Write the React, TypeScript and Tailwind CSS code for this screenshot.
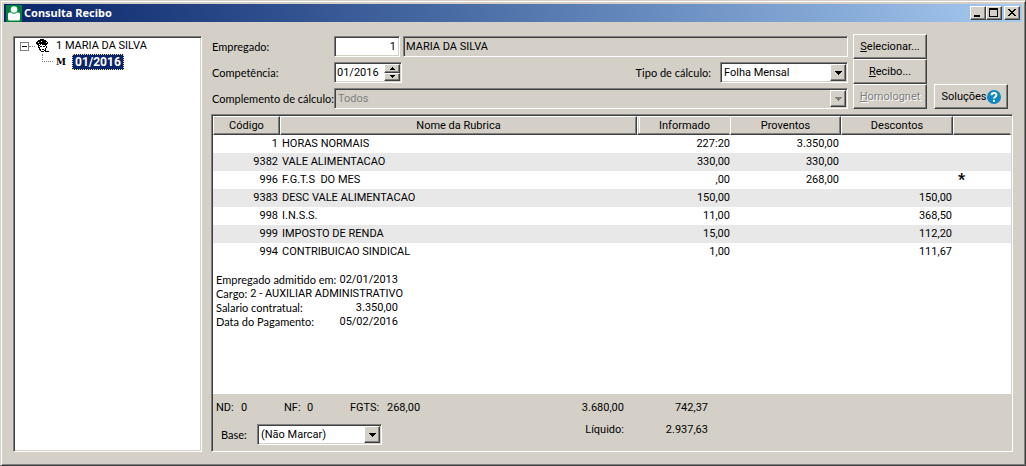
import React, { useState } from 'react';

/* ---------- classic bevels ---------- */
const sunken =
  'border border-t-[#808080] border-l-[#808080] border-r-white border-b-white shadow-[inset_1px_1px_0_#404040,inset_-1px_-1px_0_#d4d0c8]';
const raised =
  'border border-t-white border-l-white border-r-[#404040] border-b-[#404040] shadow-[inset_-1px_-1px_0_#808080] bg-[#d4d0c8]';
const labelFont = "font-[Lato,'Liberation_Sans',sans-serif]";

/* ---------- data ---------- */
const rubricas = [
  { codigo: '1', nome: 'HORAS NORMAIS', informado: '227:20', provento: '3.350,00', desconto: '', marca: '' },
  { codigo: '9382', nome: 'VALE ALIMENTACAO', informado: '330,00', provento: '330,00', desconto: '', marca: '' },
  { codigo: '996', nome: 'F.G.T.S  DO MES', informado: ',00', provento: '268,00', desconto: '', marca: '*' },
  { codigo: '9383', nome: 'DESC VALE ALIMENTACAO', informado: '150,00', provento: '', desconto: '150,00', marca: '' },
  { codigo: '998', nome: 'I.N.S.S.', informado: '11,00', provento: '', desconto: '368,50', marca: '' },
  { codigo: '999', nome: 'IMPOSTO DE RENDA', informado: '15,00', provento: '', desconto: '112,20', marca: '' },
  { codigo: '994', nome: 'CONTRIBUICAO SINDICAL', informado: '1,00', provento: '', desconto: '111,67', marca: '' },
];

/* ---------- small pieces ---------- */
const Arrow: React.FC<{ up?: boolean; small?: boolean; color?: string }> = ({ up, small, color = '#000' }) => (
  <svg
    width={small ? 5 : 7}
    height={small ? 3 : 4}
    viewBox={small ? '0 0 5 3' : '0 0 7 4'}
    shapeRendering="crispEdges"
    className={up ? 'rotate-180' : ''}
    aria-hidden
  >
    <path d={small ? 'M0 0h5v1H0zM1 1h3v1H1zM2 2h1v1H2z' : 'M0 0h7v1H0zM1 1h5v1H1zM2 2h3v1H2zM3 3h1v1H3z'} fill={color} />
  </svg>
);

type ComboProps = { id: string; options: string[]; disabled?: boolean; className: string };

const Combo: React.FC<ComboProps> = ({ id, options, disabled, className }) => (
  <div className={`relative h-[21px] ${className}`}>
    <select
      id={id}
      disabled={disabled}
      className={`h-full w-full appearance-none rounded-none pl-[3px] pr-5 outline-none ${sunken} ${
        disabled ? 'bg-[#d4d0c8] text-[#808080] opacity-100' : 'bg-white text-black'
      }`}
    >
      {options.map((o) => (
        <option key={o}>{o}</option>
      ))}
    </select>
    <span
      className={`pointer-events-none absolute top-[2px] right-[2px] bottom-[2px] flex w-4 items-center justify-center ${raised}`}
    >
      <Arrow color={disabled ? '#808080' : '#000'} />
    </span>
  </div>
);

const PushButton: React.FC<React.ButtonHTMLAttributes<HTMLButtonElement>> = ({ className = '', ...props }) => (
  <button
    type="button"
    className={`flex h-[25px] w-[74px] items-center justify-center ${raised} ${className}`}
    {...props}
  />
);

const AppIcon = () => (
  <svg width="16" height="17" viewBox="0 0 16 17" aria-hidden>
    <rect width="16" height="17" fill="#00843d" />
    <circle cx="8" cy="4.500" r="3.300" fill="#fff" />
    <path d="M2 9Q2 7.500 3.500 7.500H5q3 2.600 6 0h1.500Q14 7.500 14 9v5q0 1.500-1.500 1.500h-9Q2 15.500 2 14z" fill="#fff" />
  </svg>
);

const workerPixels = [
  '....####.....',
  '..########...',
  '.####.#####..',
  '##.#######.#.',
  '############.',
  '.##.#.#####..',
  '..##.....#...',
  '..#.##.##.#..',
  '..##......#..',
  '...#.....#...',
  '...##.##.#...',
  '....#...##...',
  '.....###.####',
];

const WorkerIcon = () => (
  <svg width="14" height="14" viewBox="0 0 14 14" shapeRendering="crispEdges" aria-hidden>
    {workerPixels.flatMap((row, y) =>
      [...row].map((c, x) => (c === '#' ? <rect key={`${x}-${y}`} x={x} y={y} width="1" height="1" /> : null))
    )}
  </svg>
);

const HelpIcon = () => (
  <svg width="14" height="14" viewBox="0 0 14 14" aria-hidden>
    <circle cx="7" cy="7" r="7" fill="#0d86c4" />
    <path d="M4.600 5.200Q4.700 3 7 3t2.400 2q0 1-1.200 1.800T7 8.600" fill="none" stroke="#fff" strokeWidth="2" />
    <rect x="6" y="9.800" width="2" height="2" fill="#fff" />
  </svg>
);

/* ---------- title bar ---------- */
const TitleBar = () => (
  <header className="flex h-[18px] items-center bg-linear-to-r from-[#0a246a] to-[#a6caf0] pr-[2px] pl-[2px]">
    <AppIcon />
    <h1 className="flex-1 pl-[2px] font-['Noto_Sans','Open_Sans',sans-serif] text-[11px] leading-[18px] font-bold text-white">
      Consulta Recibo
    </h1>
    <button type="button" aria-label="Minimizar" className={`flex h-[14px] w-4 items-center justify-center ${raised}`}>
      <svg width="10" height="10" viewBox="0 0 10 10" shapeRendering="crispEdges" aria-hidden>
        <path d="M1 7h6v2H1z" />
      </svg>
    </button>
    <button type="button" aria-label="Maximizar" className={`flex h-[14px] w-4 items-center justify-center ${raised}`}>
      <svg width="10" height="10" viewBox="0 0 10 10" shapeRendering="crispEdges" aria-hidden>
        <path d="M0 0h9v9H0zM1 2v6h7V2z" fillRule="evenodd" />
      </svg>
    </button>
    <button
      type="button"
      aria-label="Fechar"
      className={`ml-[2px] flex h-[14px] w-4 items-center justify-center ${raised}`}
    >
      <svg width="10" height="10" viewBox="0 0 10 10" shapeRendering="crispEdges" aria-hidden>
        <path d="M1 1h2v1H1zM7 1h2v1H7zM2 2h2v1H2zM6 2h2v1H6zM3 3h4v1H3zM4 4h2v1H4zM3 5h4v1H3zM2 6h2v1H2zM6 6h2v1H6zM1 7h2v1H1zM7 7h2v1H7z" />
      </svg>
    </button>
  </header>
);

/* ---------- employee tree ---------- */
const Tree = () => (
  <nav aria-label="Empregados" className={`mt-[2px] w-[189px] shrink-0 bg-white p-px ${sunken}`}>
    <ul className="pl-[5px]">
      <li>
        <div className="flex h-4 items-center">
          <button type="button" aria-label="Recolher" className="flex h-[9px] w-[9px] items-center justify-center border border-[#808080]">
            <span className="h-px w-[5px] bg-black" />
          </button>
          <span className="mr-px w-[6px] border-t border-dotted border-[#808080]" />
          <WorkerIcon />
          <span className="ml-[6px]">1 MARIA DA SILVA</span>
        </div>
        <ul className="pl-[22px]">
          <li className="flex h-4">
            <span className="mr-[3px] h-2 w-[11px] border-b border-l border-dotted border-[#808080]" />
            <span className="w-4 font-['DejaVu_Serif',serif] text-[9px] leading-4 font-bold">M</span>
            <a
              href="#recibo"
              className="border border-dotted border-[#f5db95] bg-[#0a246a] px-[2px] text-[12px] leading-[14px] font-bold text-white"
            >
              01/2016
            </a>
          </li>
        </ul>
      </li>
    </ul>
  </nav>
);

/* ---------- filters + actions ---------- */
const FilterForm = () => {
  const [competencia, setCompetencia] = useState('01/2016');

  const step = (delta: number) => {
    const [mes, ano] = competencia.split('/').map(Number);
    const total = ano * 12 + (mes - 1) + delta;
    setCompetencia(`${String((total % 12) + 1).padStart(2, '0')}/${Math.floor(total / 12)}`);
  };

  return (
    <div className="flex">
      <form className="flex flex-1 flex-col gap-[5px] pt-[2px]">
        <div className="flex h-[21px] items-center">
          <label htmlFor="empregado" className={`w-[123px] pl-px ${labelFont}`}>Empregado:</label>
          <input id="empregado" defaultValue="1" className={`h-full w-[66px] bg-white pr-[3px] text-right outline-none ${sunken}`} />
          <input
            aria-label="Nome do empregado"
            readOnly
            value="MARIA DA SILVA"
            className={`ml-[3px] h-full flex-1 bg-[#d4d0c8] pl-[2px] outline-none ${sunken}`}
          />
        </div>
        <div className="flex h-[21px] items-center">
          <label htmlFor="competencia" className={`w-[123px] pl-px ${labelFont}`}>Competência:</label>
          <div className={`flex h-full w-[68px] bg-white p-px ${sunken}`}>
            <input
              id="competencia"
              value={competencia}
              onChange={(e) => setCompetencia(e.target.value)}
              className="w-0 flex-1 pl-px outline-none"
            />
            <div className="flex w-4 flex-col">
              <button type="button" aria-label="Próxima" onClick={() => step(1)} className={`flex flex-1 items-center justify-center ${raised}`}>
                <Arrow up small />
              </button>
              <button type="button" aria-label="Anterior" onClick={() => step(-1)} className={`flex flex-1 items-center justify-center ${raised}`}>
                <Arrow small />
              </button>
            </div>
          </div>
          <label htmlFor="tipo" className={`ml-auto pr-[9px] ${labelFont}`}>Tipo de cálculo:</label>
          <Combo id="tipo" options={['Folha Mensal']} className="w-[128px]" />
        </div>
        <div className="flex h-[21px] items-center">
          <label htmlFor="complemento" className={`w-[123px] pl-px whitespace-nowrap ${labelFont}`}>
            Complemento de cálculo:
          </label>
          <Combo id="complemento" options={['Todos']} disabled className="flex-1" />
        </div>
      </form>

      <div className="ml-[5px] flex flex-col">
        <PushButton><u>S</u>elecionar...</PushButton>
        <PushButton><u>R</u>ecibo...</PushButton>
        <PushButton disabled className="text-[#808080] [text-shadow:1px_1px_0_#fff]"><u>H</u>omolognet</PushButton>
      </div>
      <PushButton className="mr-[5px] ml-[7px] self-end">
        Soluções
        <HelpIcon />
      </PushButton>
    </div>
  );
};

/* ---------- receipt table ---------- */
const RubricaTable = () => (
  <table className="w-full table-fixed border-separate border-spacing-0">
    <colgroup>
      <col className="w-[67px]" />
      <col />
      <col className="w-[93px]" />
      <col className="w-[111px]" />
      <col className="w-[112px]" />
      <col className="w-[58px]" />
    </colgroup>
    <thead>
      <tr className="h-[19px] leading-4">
        <th className={`p-0 font-normal ${raised}`}>Código</th>
        <th className={`p-0 font-normal ${raised}`}>Nome da Rubrica</th>
        <th className="border border-t-white border-r-[#d4d0c8] border-b-[#404040] border-l-white bg-[#d4d0c8] p-0 pl-[2px] font-normal shadow-[inset_0_-1px_0_#808080,inset_1px_0_0_#d4d0c8,inset_2px_0_0_#fff]">
          Informado
        </th>
        <th className={`p-0 font-normal ${raised}`}>Proventos</th>
        <th className={`p-0 font-normal ${raised}`}>Descontos</th>
        <th
          className="border border-t-white border-r-[#d4d0c8] border-b-[#404040] border-l-white bg-[#d4d0c8] p-0 shadow-[inset_0_-1px_0_#808080]"
          aria-label="Marca"
        />
      </tr>
    </thead>
    <tbody>
      {rubricas.map((r) => (
        <tr key={r.codigo} className="h-[18px] leading-[18px] even:bg-[#e8e8e8]">
          <td className="p-0 pr-[2px] text-right">{r.codigo}</td>
          <td className="p-0 pl-[2px] whitespace-pre">{r.nome}</td>
          <td className="p-0 text-right">{r.informado}</td>
          <td className="p-0 pr-[2px] text-right">{r.provento}</td>
          <td className="p-0 pr-px text-right">{r.desconto}</td>
          <td className="p-0 pl-[5px] text-[16px] font-bold">{r.marca}</td>
        </tr>
      ))}
    </tbody>
  </table>
);

const Detalhes = () => (
  <dl className="ml-[3px] grid w-[182px] grid-cols-[auto_1fr] pt-3 leading-[14px]">
    <dt className={labelFont}>Empregado admitido em:</dt>
    <dd className="text-right">02/01/2013</dd>
    <div className="col-span-2 flex gap-[3px] whitespace-nowrap">
      <dt className={labelFont}>Cargo:</dt>
      <dd>2 - AUXILIAR ADMINISTRATIVO</dd>
    </div>
    <dt className={labelFont}>Salario contratual:</dt>
    <dd className="text-right">3.350,00</dd>
    <dt className={labelFont}>Data do Pagamento:</dt>
    <dd className="text-right">05/02/2016</dd>
  </dl>
);

const Totais = () => (
  <footer className="flex h-14 bg-[#d4d0c8] pl-[3px]">
    <div className="w-[300px] pt-[6px]">
      <div className="flex h-4 items-center">
        <span className="w-[25px]">ND:</span>
        <span className="w-[43px]">0</span>
        <span className="w-[23px]">NF:</span>
        <span className="w-[43px]">0</span>
        <span className="w-[37px]">FGTS:</span>
        <span>268,00</span>
      </div>
      <div className="mt-2 flex items-center pl-[5px]">
        <label htmlFor="base" className={`w-9 ${labelFont}`}>Base:</label>
        <Combo id="base" options={['(Não Marcar)']} className="w-[125px]" />
      </div>
    </div>
    <div className="grid w-[192px] grid-cols-[108px_84px] content-start gap-y-[6px] pt-[6px] text-right leading-4">
      <span>3.680,00</span>
      <span>742,37</span>
      <span>Líquido:</span>
      <span>2.937,63</span>
    </div>
  </footer>
);

export default function App() {
  return (
    <div className="flex min-h-screen flex-col border border-t-[#d4d0c8] border-r-[#404040] border-b-[#404040] border-l-[#d4d0c8] bg-[#d4d0c8] p-[3px] font-[Roboto,'Liberation_Sans',sans-serif] text-[11px] leading-4 text-black shadow-[inset_1px_1px_0_#fff,inset_-1px_-1px_0_#808080]">
      <TitleBar />
      <main className="flex flex-1 gap-[9px] px-[9px] pt-3 pb-[10px]">
        <Tree />
        <section className="flex min-w-0 flex-1 flex-col gap-[5px]">
          <FilterForm />
          <div className={`flex flex-1 flex-col bg-white p-px ${sunken}`}>
            <RubricaTable />
            <Detalhes />
            <div className="flex-1" />
            <Totais />
          </div>
        </section>
      </main>
    </div>
  );
}
